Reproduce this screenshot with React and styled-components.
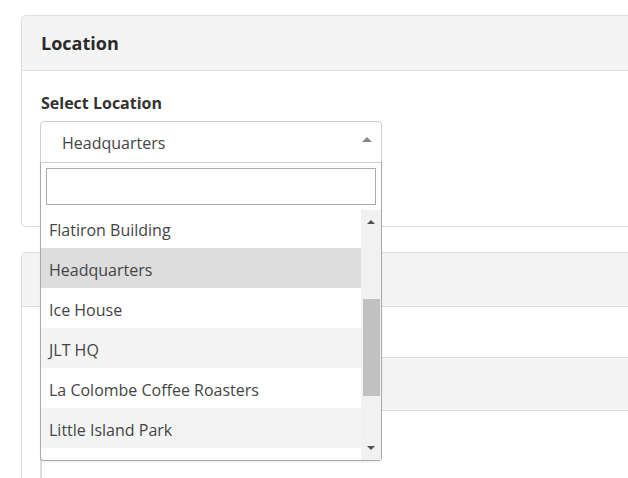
import styled, { createGlobalStyle } from 'styled-components'

// Page reset and base font
const GlobalStyle = createGlobalStyle`
  html, body {
    margin: 0;
    padding: 0;
    background: #fff;
    overflow: hidden;
  }
  body {
    font-family: "Open Sans", "Noto Sans", sans-serif;
    color: #333;
  }
  * { box-sizing: border-box; }
`

const Page = styled.div`
  /* Page wrapper, cards run off the right edge */
  width: 628px;
  height: 478px;
  overflow: hidden;
  padding: 15px 0 0 21px;
  display: flex;
  flex-direction: column;
  gap: 25px;
`

const Card = styled.section`
  /* Panel with a grey heading */
  border: 1px solid #dedede;
  border-radius: 4px;
  background: #fff;
  width: 640px;
  flex-shrink: 0;
`

const CardHeader = styled.header`
  height: ${({ $h }) => $h || 55}px;
  background: #f4f4f4;
  border-bottom: 1px solid #dedede;
  border-radius: 4px 4px 0 0;
  display: flex;
  align-items: center;
  padding: 0 19px;
  font-size: 18px;
  font-weight: 700;
  color: #2b2b2b;
`

const CardBody = styled.div`
  padding: ${({ $pad }) => $pad || '21px 18px 63px'};
`

const Label = styled.div`
  font-size: 16px;
  font-weight: 700;
  color: #333;
  line-height: 22px;
  margin: 0 0 7px 1px;
`

const SelectWrap = styled.div`
  /* Select and its open menu */
  position: relative;
  width: 342px;
`

const SelectBox = styled.div`
  height: 42px;
  border: 1px solid #cfcfcf;
  border-radius: 4px 4px 0 0;
  display: flex;
  align-items: center;
  justify-content: space-between;
  padding: 1px 9px 0 21px;
  font-size: 16px;
  color: #444;
`

const Caret = styled.span`
  width: 0;
  height: 0;
  border-left: 5px solid transparent;
  border-right: 5px solid transparent;
  border-bottom: 5px solid #888;
  margin-top: -6px;
`

const Menu = styled.div`
  /* Open dropdown list, lies over the page */
  position: absolute;
  top: 41px;
  left: 0;
  width: 342px;
  background: #fff;
  border: 1px solid #aaa;
  border-top: 1px solid #cfcfcf;
  border-radius: 0 0 4px 4px;
  z-index: 5;
  box-shadow: 0 1px 2px rgba(0, 0, 0, 0.08);
`

const SearchBox = styled.div`
  padding: 5px;
`

const SearchInput = styled.input`
  display: block;
  width: 100%;
  height: 37px;
  border: 1px solid #aaa;
  outline: none;
  font-family: inherit;
  font-size: 16px;
  padding: 0 6px;
`

const ListArea = styled.div`
  display: flex;
  height: 250px;
`

const List = styled.ul`
  flex: 1;
  list-style: none;
  margin: 0;
  padding: 0;
  overflow: hidden;
`

const ListInner = styled.div`
  margin-top: -2px;
`

const Option = styled.li`
  height: 40px;
  display: flex;
  align-items: center;
  padding: 3px 8px 0;
  font-size: 16px;
  color: #444;
  background: ${({ $selected, $striped }) =>
    $selected ? '#dddddd' : $striped ? '#f4f4f4' : '#fff'};
`

const Scrollbar = styled.div`
  width: 20px;
  background: #f1f1f1;
  display: flex;
  flex-direction: column;
  align-items: center;
`

const ScrollArrow = styled.span`
  height: 24px;
  display: flex;
  align-items: center;
  justify-content: center;
  &::before {
    content: '';
    width: 0;
    height: 0;
    border-left: 4px solid transparent;
    border-right: 4px solid transparent;
    ${({ $down }) =>
      $down ? 'border-top: 4px solid #505050;' : 'border-bottom: 4px solid #505050;'}
  }
`

const Track = styled.div`
  flex: 1;
  width: 100%;
  padding: 65px 1px 0 2px;
`

const Thumb = styled.div`
  height: 97px;
  background: #c1c1c1;
`

const InnerCard = styled.div`
  /* Nested panel in the second card */
  border: 1px solid #dedede;
  border-radius: 4px;
  width: 640px;
`

const InnerHeader = styled.div`
  height: 53px;
  background: #f4f4f4;
  border-bottom: 1px solid #dedede;
`

const InnerBody = styled.div`
  height: 120px;
  padding-top: 49px;
`

const Field = styled.div`
  height: 80px;
  width: 342px;
  border-left: 1px solid #d8d8d8;
`

const locations = [
  'Flatiron Building',
  'Headquarters',
  'Ice House',
  'JLT HQ',
  'La Colombe Coffee Roasters',
  'Little Island Park',
]

function App() {
  const selected = 'Headquarters'

  return (
    <>
      <GlobalStyle />
      <Page>
        <Card>
          <CardHeader>Location</CardHeader>
          <CardBody>
            <Label>Select Location</Label>
            <SelectWrap>
              <SelectBox>
                {selected}
                <Caret />
              </SelectBox>
              <Menu>
                <SearchBox>
                  <SearchInput type="text" />
                </SearchBox>
                <ListArea>
                  <List>
                    <ListInner>
                      {locations.map((name, i) => (
                        <Option key={name} $selected={name === selected} $striped={i % 2 === 1}>
                          {name}
                        </Option>
                      ))}
                    </ListInner>
                  </List>
                  <Scrollbar>
                    <ScrollArrow />
                    <Track>
                      <Thumb />
                    </Track>
                    <ScrollArrow $down />
                  </Scrollbar>
                </ListArea>
              </Menu>
            </SelectWrap>
          </CardBody>
        </Card>
        <Card>
          <CardHeader $h={54} />
          <CardBody $pad="50px 0 0 18px">
            <InnerCard>
              <InnerHeader />
              <InnerBody>
                <Field />
              </InnerBody>
            </InnerCard>
          </CardBody>
        </Card>
      </Page>
    </>
  )
}

export default App
